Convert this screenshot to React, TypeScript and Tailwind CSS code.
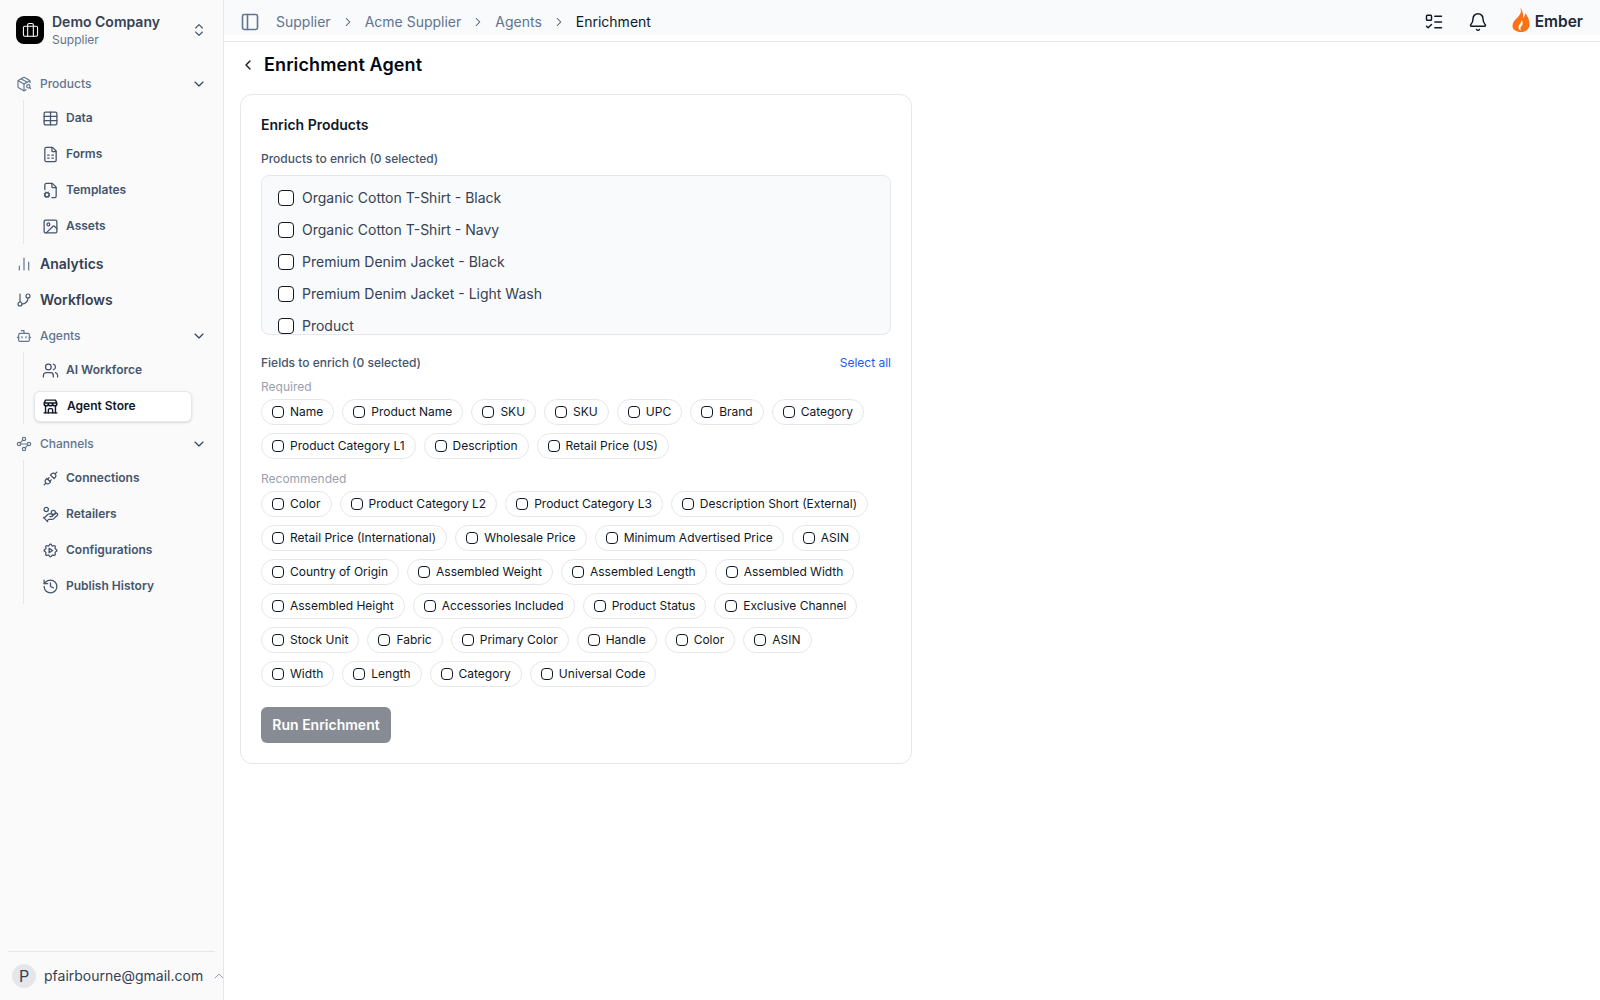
import { useState } from "react"
import {
  Bell, Bot, Briefcase, ChartNoAxesColumn, ChevronDown, ChevronLeft, ChevronRight, ChevronUp, ChevronsUpDown,
  FileCog, FileSpreadsheet, GitBranch, HandCoins, History, Image, ListTodo, PackageSearch, PanelLeft, Table, Users, Waypoints,
} from "lucide-react"
import { TbBuildingStore, TbPlugConnected, TbSettingsAutomation } from "react-icons/tb"
import type { ComponentType } from "react"

type IconType = ComponentType<{ className?: string; strokeWidth?: number }>

const products = [
  "Organic Cotton T-Shirt - Black",
  "Organic Cotton T-Shirt - Navy",
  "Premium Denim Jacket - Black",
  "Premium Denim Jacket - Light Wash",
  "Product",
]

const required = ["Name", "Product Name", "SKU", "SKU", "UPC", "Brand", "Category", "Product Category L1", "Description", "Retail Price (US)"]

const recommended = [
  "Color", "Product Category L2", "Product Category L3", "Description Short (External)",
  "Retail Price (International)", "Wholesale Price", "Minimum Advertised Price", "ASIN",
  "Country of Origin", "Assembled Weight", "Assembled Length", "Assembled Width",
  "Assembled Height", "Accessories Included", "Product Status", "Exclusive Channel",
  "Stock Unit", "Fabric", "Primary Color", "Handle", "Color", "ASIN",
  "Width", "Length", "Category", "Universal Code",
]

function SubItem({ icon: Icon, label, active }: { icon: IconType; label: string; active?: boolean }) {
  if (active) {
    return (
      <div className="flex h-9 items-center">
        <div className="flex h-[31px] w-[158px] items-center gap-2 rounded-md border border-gray-200 bg-white pl-[7px] text-xs font-semibold text-gray-900 shadow-sm">
          <Icon className="h-[17px] w-[17px]" strokeWidth={2} />
          {label}
        </div>
      </div>
    )
  }
  return (
    <div className="flex h-9 items-center gap-[7px] pl-2 text-xs font-semibold text-slate-600">
      <Icon className="h-[17px] w-[17px] text-slate-600" strokeWidth={1.8} />
      {label}
    </div>
  )
}

function GroupHeader({ icon: Icon, label }: { icon: IconType; label: string }) {
  return (
    <div className="flex h-9 items-center pl-4 pr-4 text-xs font-medium text-slate-500">
      <Icon className="mr-2 h-4 w-4" strokeWidth={1.75} />
      <span className="flex-1">{label}</span>
      <ChevronDown className="h-4 w-4 text-slate-700" strokeWidth={1.75} />
    </div>
  )
}

function SubList({ children }: { children: React.ReactNode }) {
  return <div className="-mt-[2px] mb-[2px] ml-[23px] flex flex-col border-l border-gray-200 pl-[10px]">{children}</div>
}

function Checkbox({ size }: { size: string }) {
  return <span className={`${size} shrink-0 rounded-[4px] border border-gray-900 bg-white`} />
}

function FieldPill({ label }: { label: string }) {
  return (
    <div className="flex h-[26px] items-center gap-1.5 rounded-full border border-gray-200 bg-white px-[10px] text-xs text-gray-900">
      <Checkbox size="h-3 w-3" />
      {label}
    </div>
  )
}

export default function App() {
  const [selected] = useState(0)

  return (
    <div className="flex h-[1000px] w-[1600px] overflow-hidden bg-white font-['Inter',sans-serif]">
      <aside className="flex w-[224px] shrink-0 flex-col overflow-hidden border-r border-slate-200 bg-[#fafafa]">
        <div className="flex h-[60px] items-center pl-4 pr-4">
          <div className="flex h-7 w-7 items-center justify-center rounded-lg bg-black">
            <Briefcase className="h-[17px] w-[17px] text-white" strokeWidth={1.5} />
          </div>
          <div className="ml-2 flex-1 pt-[2px]">
            <div className="text-sm font-semibold leading-4 text-gray-700">Demo Company</div>
            <div className="mt-[2px] text-xs leading-4 text-slate-500">Supplier</div>
          </div>
          <ChevronsUpDown className="h-4 w-4 text-slate-600" strokeWidth={1.75} />
        </div>

        <nav className="mt-[6px] flex flex-1 flex-col">
          <GroupHeader icon={PackageSearch} label="Products" />
          <SubList>
            <SubItem icon={Table} label="Data" />
            <SubItem icon={FileSpreadsheet} label="Forms" />
            <SubItem icon={FileCog} label="Templates" />
            <SubItem icon={Image} label="Assets" />
          </SubList>
          <div className="flex h-9 items-center gap-2 pl-4 text-sm font-semibold text-gray-700">
            <ChartNoAxesColumn className="h-4 w-4 text-slate-500" strokeWidth={1.75} />
            Analytics
          </div>
          <div className="flex h-9 items-center gap-2 pl-4 text-sm font-semibold text-gray-700">
            <GitBranch className="h-4 w-4 text-slate-600" strokeWidth={1.75} />
            Workflows
          </div>
          <GroupHeader icon={Bot} label="Agents" />
          <SubList>
            <SubItem icon={Users} label="AI Workforce" />
            <SubItem icon={TbBuildingStore} label="Agent Store" active />
          </SubList>
          <GroupHeader icon={Waypoints} label="Channels" />
          <SubList>
            <SubItem icon={TbPlugConnected} label="Connections" />
            <SubItem icon={HandCoins} label="Retailers" />
            <SubItem icon={TbSettingsAutomation} label="Configurations" />
            <SubItem icon={History} label="Publish History" />
          </SubList>
        </nav>

        <div className="mx-2 flex h-[49px] items-center gap-2 border-t border-gray-200 pl-1 text-sm text-gray-700">
          <div className="flex h-6 w-6 shrink-0 items-center justify-center rounded-full bg-gray-200 text-base">P</div>
          pfairbourne@gmail.com
          <ChevronUp className="h-4 w-4 shrink-0 text-slate-400" strokeWidth={1.5} />
        </div>
      </aside>

      <main className="flex-1">
        <header className="h-[42px] border-b border-gray-200">
          <div className="flex h-[35px] items-center bg-[#f8fafc] pl-4 pr-[17px] pt-2">
            <PanelLeft className="h-5 w-5 text-slate-500" strokeWidth={1.9} />
            <div className="ml-4 flex items-center text-sm text-slate-500">
              <span>Supplier</span>
              <ChevronRight className="mx-[10px] h-3.5 w-3.5 text-slate-600" strokeWidth={1.75} />
              <span>Acme Supplier</span>
              <ChevronRight className="mx-[10px] h-3.5 w-3.5 text-slate-600" strokeWidth={1.75} />
              <span>Agents</span>
              <ChevronRight className="mx-[10px] h-3.5 w-3.5 text-slate-600" strokeWidth={1.75} />
              <span className="text-gray-900">Enrichment</span>
            </div>
            <div className="ml-auto flex items-center">
              <ListTodo className="h-5 w-5 text-gray-900" strokeWidth={1.75} />
              <Bell className="ml-6 h-5 w-5 text-gray-900" strokeWidth={1.75} />
              <svg className="ml-[24px] -mt-[4px] h-[25px] w-[18px]" viewBox="0 0 34 50">
                <path d="M14 0C20 8 16 14 10 21C4 27 0 31 0 38C0 45 7 50 17 50C27 50 34 44 34 34C34 25 30 17 25 12C25 17 24 20 21 22C22 14 20 6 14 0Z" fill="#f97316" />
                <path d="M18 26C19 32 12 35 12 41C12 45 15 47 18 47C14 44 16 40 19 37C21 34 21 29 18 26Z" fill="#fff" />
              </svg>
              <span className="ml-[5px] text-[15.5px] font-semibold text-gray-800">Ember</span>
            </div>
          </div>
        </header>

        <div className="pl-4">
          <div className="flex h-[46px] items-center">
            <ChevronLeft className="h-4 w-4 text-gray-900" strokeWidth={2} />
            <h1 className="ml-2 text-lg font-semibold tracking-[0.12px] text-gray-950">Enrichment Agent</h1>
          </div>

          <section className="mt-[6px] w-[672px] rounded-xl border border-gray-200 bg-white p-5">
            <h2 className="text-sm font-semibold leading-5 text-gray-900">Enrich Products</h2>
            <div className="mt-4 text-xs font-medium leading-4 text-slate-600">Products to enrich ({selected} selected)</div>

            <div className="mt-2 h-[160px] overflow-hidden rounded-lg border border-gray-200 bg-[#f8fafc] pl-4 pt-[6px]">
              {products.map((p) => (
                <div key={p} className="flex h-8 items-center gap-2 text-sm text-gray-700">
                  <Checkbox size="h-4 w-4" />
                  {p}
                </div>
              ))}
            </div>

            <div className="mt-5 flex items-center justify-between text-xs leading-4">
              <span className="font-medium text-slate-600">Fields to enrich ({selected} selected)</span>
              <span className="text-blue-600">Select all</span>
            </div>

            <div className="mt-2 text-xs leading-4 text-gray-400">Required</div>
            <div className="mt-1 flex flex-wrap gap-x-2 gap-y-2">
              {required.map((f, i) => <FieldPill key={i} label={f} />)}
            </div>

            <div className="mt-3 text-xs leading-4 text-gray-400">Recommended</div>
            <div className="mt-1 flex flex-wrap gap-x-2 gap-y-2">
              {recommended.map((f, i) => <FieldPill key={i} label={f} />)}
            </div>

            <button className="mt-5 h-9 w-[130px] rounded-md bg-gray-900/50 text-sm font-semibold text-white">Run Enrichment</button>
          </section>
        </div>
      </main>
    </div>
  )
}
